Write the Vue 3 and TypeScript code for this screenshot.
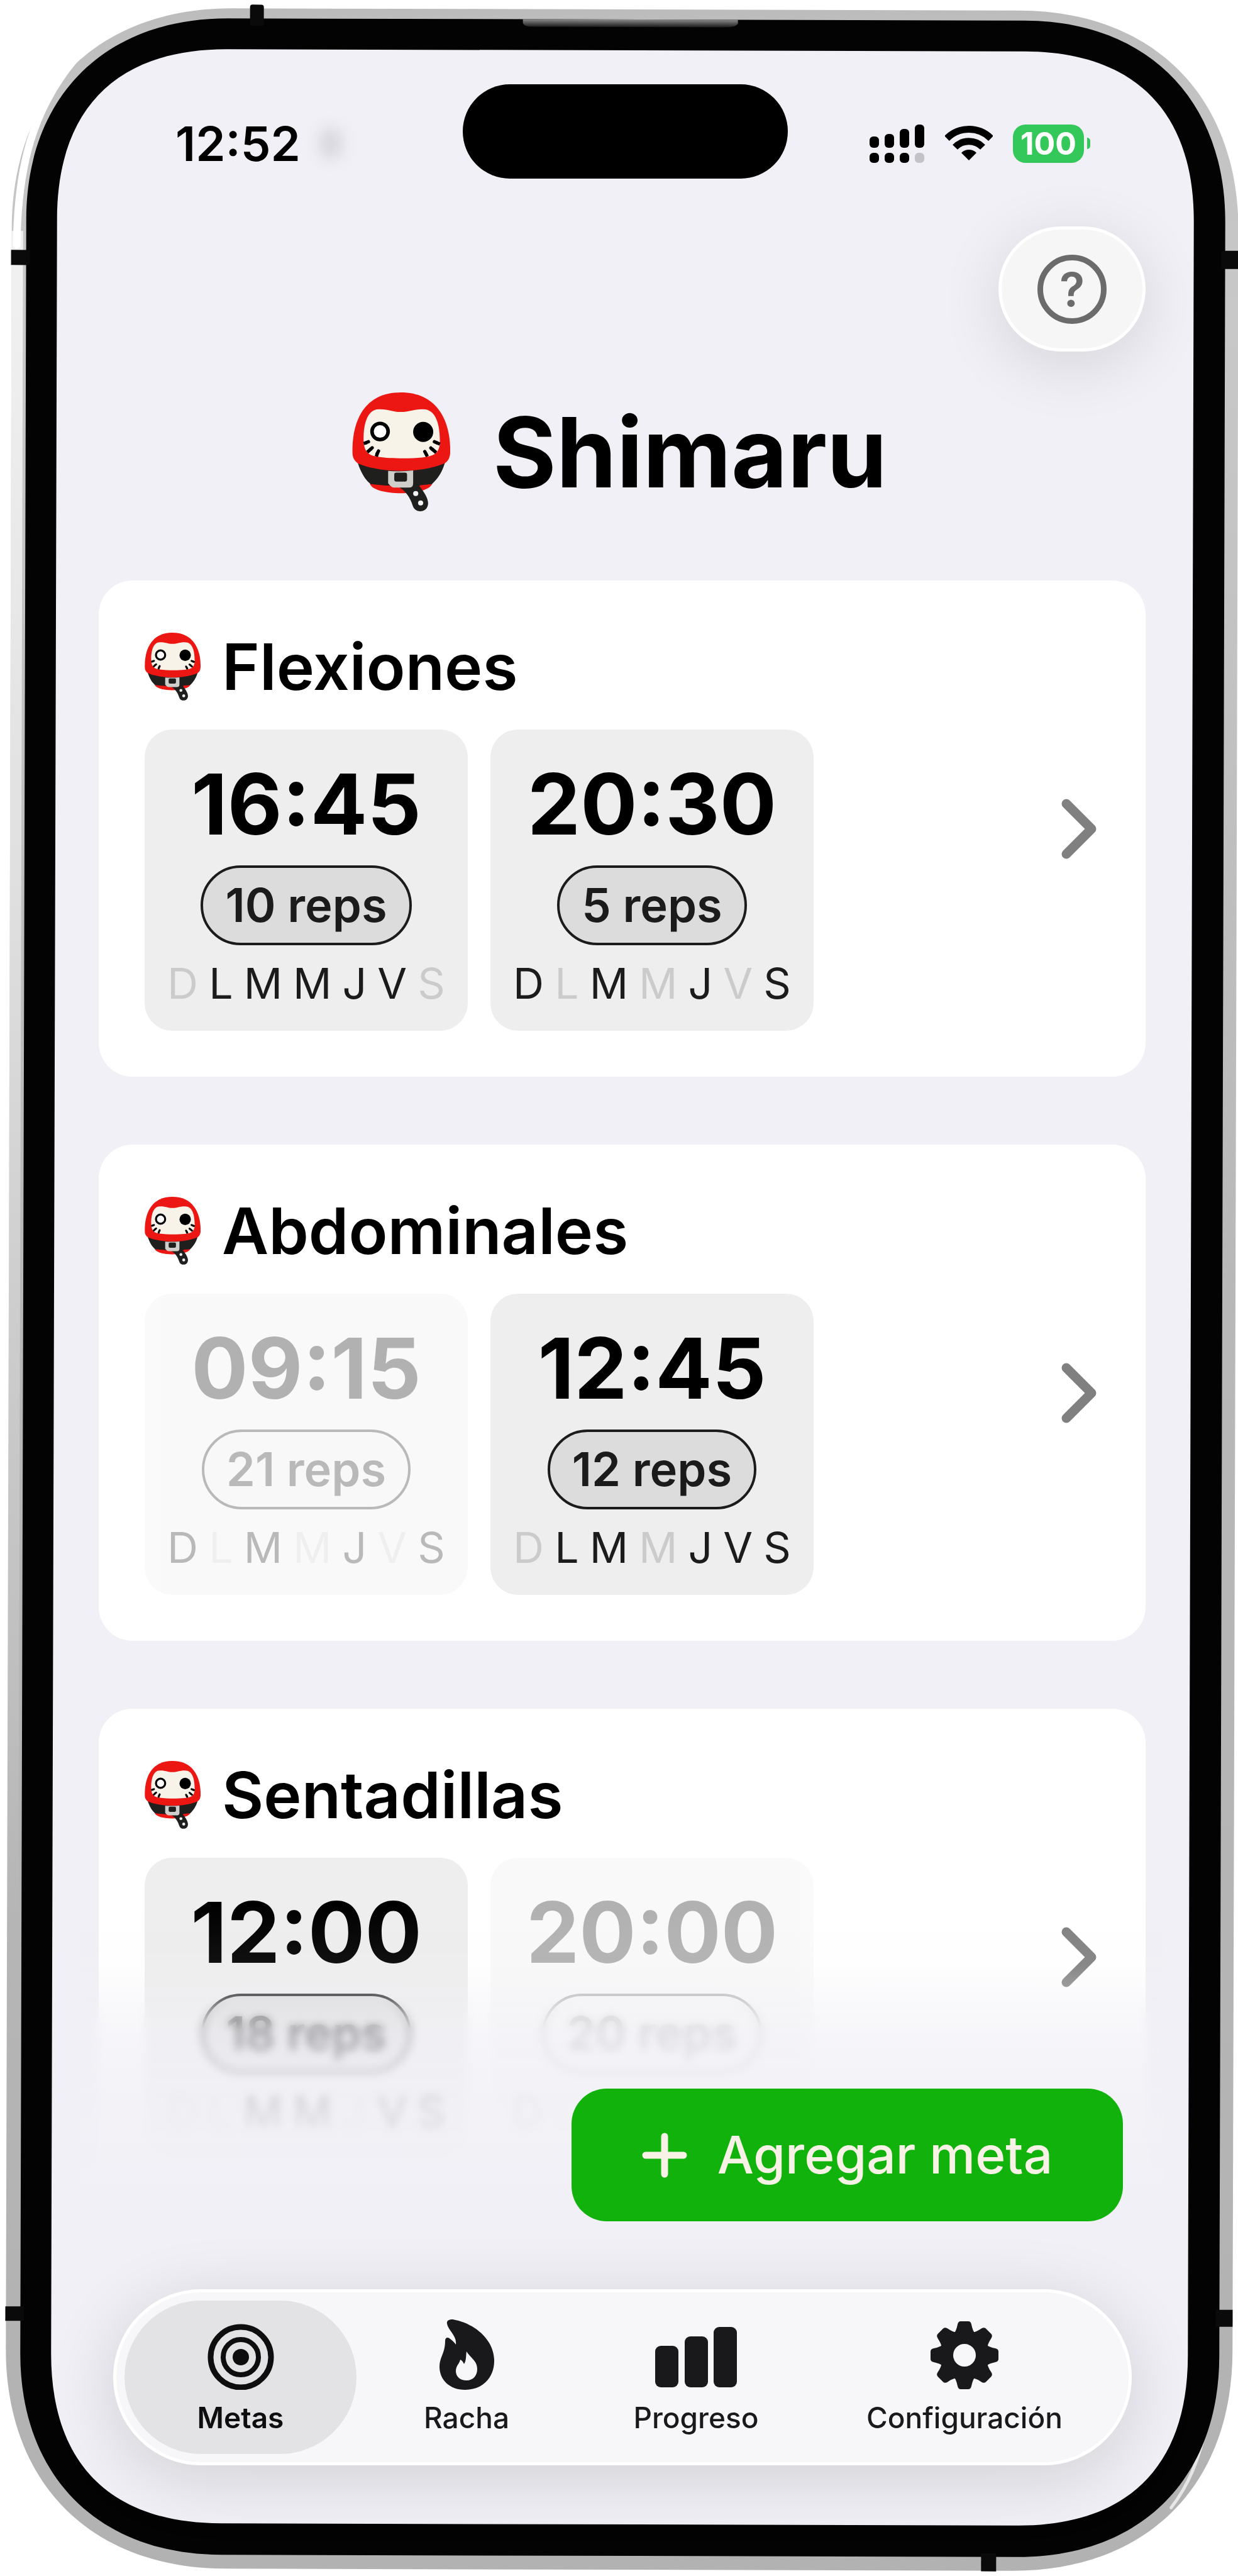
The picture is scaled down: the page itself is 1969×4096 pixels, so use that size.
<script setup lang="ts">
interface Slot {
  time: string
  reps: number
  /** One flag per weekday, Sunday first. */
  days: boolean[]
  muted?: boolean
  /** Number of weekdays left readable when the add button lies over the rest. */
  readable?: number
}

interface Goal {
  name: string
  slots: Slot[]
}

const weekdays: string[] = ['D', 'L', 'M', 'M', 'J', 'V', 'S']

const week = (mask: string): boolean[] => mask.split('').map((c) => c === '1')

const goals: Goal[] = [
  {
    name: 'Flexiones',
    slots: [
      { time: '16:45', reps: 10, days: week('0111110') },
      { time: '20:30', reps: 5, days: week('1010101') },
    ],
  },
  {
    name: 'Abdominales',
    slots: [
      { time: '09:15', reps: 21, days: week('1010101'), muted: true },
      { time: '12:45', reps: 12, days: week('0110111') },
    ],
  },
  {
    name: 'Sentadillas',
    slots: [
      { time: '12:00', reps: 18, days: week('0011011') },
      { time: '20:00', reps: 20, days: week('1010101'), muted: true, readable: 2 },
    ],
  },
]

/** Rounded shell outline with a soft, continuous corner. */
function shell(l: number, t: number, r: number, b: number, e: number, k: number): string {
  const h = e - k
  return [
    `M${l} ${t + e}`,
    `C${l} ${t + h} ${l + h} ${t} ${l + e} ${t}`,
    `H${r - e}`,
    `C${r - h} ${t} ${r} ${t + h} ${r} ${t + e}`,
    `V${b - e}`,
    `C${r} ${b - h} ${r - h} ${b} ${r - e} ${b}`,
    `H${l + e}`,
    `C${l + h} ${b} ${l} ${b - h} ${l} ${b - e}`,
    'Z',
  ].join('')
}

const outer = shell(14, 15, 1965, 4086, 350, 214)
const bezel = shell(37, 31, 1944, 4064, 320, 195)
const display = shell(86, 80, 1894, 4014, 270, 175)
const teeth = [0, 45, 90, 135, 180, 225, 270, 315]
</script>

<template>
  <div class="phone">
    <svg class="frame" viewBox="0 0 1969 4096" preserveAspectRatio="none" aria-hidden="true">
      <defs>
        <linearGradient id="metal" x1="0" y1="0" x2="0" y2="1">
          <stop offset="0" stop-color="#bcbcbc" />
          <stop offset="0.03" stop-color="#c2c2c2" />
          <stop offset="0.12" stop-color="#c8c8c8" />
          <stop offset="0.5" stop-color="#b8b8b8" />
          <stop offset="1" stop-color="#b2b2b2" />
        </linearGradient>
        <linearGradient id="sheen" x1="0" y1="0" x2="0" y2="1">
          <stop offset="0" stop-color="#fff" stop-opacity="0.75" />
          <stop offset="0.4" stop-color="#fff" stop-opacity="0.5" />
          <stop offset="1" stop-color="#fff" stop-opacity="0" />
        </linearGradient>
        <linearGradient id="speaker" x1="0" y1="0" x2="0" y2="1">
          <stop offset="0" stop-color="#8a8a8a" />
          <stop offset="1" stop-color="#1c1c1c" />
        </linearGradient>
      </defs>
      <g transform="rotate(0.16 985 2048)">
        <path :d="outer" fill="url(#metal)" />
        <rect x="14" y="370" width="18" height="2700" fill="url(#sheen)" />
        <path d="M22 392C23 270 46 178 112 98" fill="none" stroke="#fff" stroke-width="12" stroke-linecap="round" />
        <path d="M1925 3850C1912 3910 1895 3950 1868 3985" fill="none" stroke="#e6e6e6" stroke-width="5" stroke-linecap="round" />
        <path :d="bezel" fill="#030303" />
        <path d="M826 31H1168V37Q1165 43 1150 43H840Q828 43 826 37Z" fill="url(#speaker)" />
        <g fill="#0a0a0a">
          <rect x="392" y="9" width="22" height="34" rx="4" />
          <rect x="13" y="400" width="30" height="24" />
          <rect x="1938" y="396" width="28" height="29" />
          <rect x="13" y="3670" width="30" height="23" />
          <rect x="1938" y="3670" width="27" height="27" />
          <rect x="1566" y="4058" width="24" height="29" />
        </g>
        <path :d="display" fill="#f1f0f6" />
      </g>
    </svg>

    <svg class="sprite" aria-hidden="true">
      <symbol id="daruma" viewBox="105 127 498 603">
        <path d="M195 590C215 655 490 655 512 590Z" fill="#ec1613" />
        <path d="M130 470C145 530 175 575 200 592Q355 612 510 592C540 565 565 530 580 470Z" fill="#1f1f1e" />
        <path d="M107 435C103 275 165 127 352 127C540 127 607 275 603 435C601 460 592 475 576 486C520 512 430 525 355 525C275 525 180 510 132 485C117 473 108 460 107 435Z" fill="#ec1613" />
        <path d="M164 380C160 300 178 212 240 212C290 210 310 226 352 226C395 226 420 210 465 212C532 212 552 290 551 385C545 440 520 450 460 457C400 463 300 463 240 454C190 448 168 430 164 380Z" fill="#f7f3e8" />
        <circle cx="247" cy="325" r="41" fill="#fff" stroke="#000" stroke-width="18" />
        <circle cx="466" cy="327" r="51" />
        <g fill="none" stroke="#000" stroke-width="17">
          <path d="M164 386L180 381M182 430L200 414M228 452L233 436M551 389L532 381M532 432L512 415M487 452L479 436" />
          <path d="M178 381L188 377M200 414L207 408M232 438L239 424M534 382L523 377M514 417L505 409M480 438L474 427" stroke-linecap="round" />
        </g>
        <path d="M340 606H450C470 635 490 660 491 690C488 740 425 742 413 702C400 660 375 625 340 606Z" fill="#1f1f1e" />
        <path d="M415 560L450 598L440 620H380Z" fill="#1f1f1e" />
        <path d="M288 525Q352 530 415 523V588Q415 610 393 610H318Q305 610 288 588Z" fill="#cfcecb" />
        <rect x="319" y="534" width="65" height="45" rx="10" fill="#1f1f1e" />
        <circle cx="428" cy="640" r="13" fill="#f4f3f6" />
        <circle cx="453" cy="688" r="13" fill="#f4f3f6" />
      </symbol>
    </svg>

    <header class="status">
      <div class="clock">
        <span>12:52</span>
        <span class="smudge"></span>
      </div>
      <div class="island"></div>
      <div class="indicators">
        <svg class="signal" viewBox="0 0 87 61" aria-label="Señal">
          <rect x="0" y="19" width="15" height="18" rx="6" />
          <rect x="24" y="15" width="15" height="22" rx="6" />
          <rect x="48" y="7" width="15" height="30" rx="6" />
          <rect x="72" y="0" width="15" height="37" rx="6" />
          <rect x="0" y="45" width="15" height="16" rx="6" />
          <rect x="24" y="45" width="15" height="16" rx="6" />
          <rect x="48" y="45" width="15" height="16" rx="6" />
          <rect x="72" y="45" width="15" height="16" rx="6" fill="#c3c2c7" />
        </svg>
        <svg class="wifi" viewBox="0 0 76 56" aria-label="Wi-Fi">
          <g fill="none" stroke="#000" stroke-width="11">
            <path d="M3 20A49.500 49.500 0 0 1 73 20" />
            <path d="M16 34A31 31 0 0 1 60 34" />
          </g>
          <path d="M38 55L26 43A17 17 0 0 1 50 43Z" />
        </svg>
        <div class="battery"><span class="level">100</span><span class="nub"></span></div>
      </div>
    </header>

    <div class="toolbar">
      <button class="help" type="button" aria-label="Ayuda"><span class="ring">?</span></button>
    </div>

    <div class="brand">
      <svg class="logo" aria-hidden="true"><use href="#daruma" /></svg>
      <h1>Shimaru</h1>
    </div>

    <main class="goals">
      <article v-for="goal in goals" :key="goal.name" class="card">
        <div class="body">
          <div class="heading">
            <svg class="mark" aria-hidden="true"><use href="#daruma" /></svg>
            <h2>{{ goal.name }}</h2>
          </div>
          <div class="slots">
            <section v-for="slot in goal.slots" :key="slot.time" class="slot" :class="{ muted: slot.muted }">
              <div class="time">{{ slot.time }}</div>
              <div class="reps">{{ slot.reps }} reps</div>
              <div class="days" :class="{ partial: slot.readable }">
                <span
                  v-for="(day, i) in weekdays.slice(0, slot.readable ?? 7)"
                  :key="i"
                  :class="{ off: !slot.days[i] }"
                >{{ day }}</span>
              </div>
            </section>
          </div>
        </div>
        <button class="open" type="button" :aria-label="'Abrir ' + goal.name">
          <svg viewBox="0 0 56 96"><path d="M8 8L48 48L8 88" /></svg>
        </button>
      </article>
      <div class="haze"></div>
      <div class="fade"></div>
      <button class="add" type="button">
        <svg viewBox="0 0 72 72" aria-hidden="true"><path d="M36 6V66M6 36H66" /></svg>
        <span>Agregar meta</span>
      </button>
    </main>

    <nav class="tabs">
      <button class="tab metas active" type="button">
        <svg width="106" height="112" viewBox="-53 -60 106 112" aria-hidden="true">
          <g fill="none" stroke="currentColor">
            <circle r="48" stroke-width="9" />
            <circle r="28" stroke-width="8" />
          </g>
          <circle r="13" fill="currentColor" />
        </svg>
        <span>Metas</span>
      </button>
      <button class="tab racha" type="button">
        <svg width="87" height="112" viewBox="0 0 87 112" aria-hidden="true">
          <path
            fill="currentColor"
            fill-rule="evenodd"
            d="M12 7C11 2 15 0 21 0C56 6 87 32 87 66C87 94 67 112 41 112C16 112 0 96 0 75C0 60 9 54 9 34C9 28 14 28 17 31C21 34 24 37 26 40C28 26 14 18 12 7ZM43 51C42 56 43 65 39 71C37 67 36 65 33 64C32 70 26 74 26 82C26 91 33 97 43 97C54 97 60 89 60 79C60 66 50 62 43 51Z"
          />
        </svg>
        <span>Racha</span>
      </button>
      <button class="tab progreso" type="button">
        <svg width="130" height="112" viewBox="0 -12 130 112" aria-hidden="true">
          <g fill="currentColor">
            <rect x="0" y="30" width="37" height="66" rx="9" />
            <rect x="47" y="15" width="37" height="81" rx="9" />
            <rect x="93" y="0" width="37" height="96" rx="9" />
          </g>
        </svg>
        <span>Progreso</span>
      </button>
      <button class="tab config" type="button">
        <svg width="110" height="116" viewBox="-55 -61 110 116" aria-hidden="true">
          <circle r="29" fill="none" stroke="currentColor" stroke-width="22" />
          <path
            v-for="angle in teeth"
            :key="angle"
            :transform="`rotate(${angle})`"
            fill="currentColor"
            d="M-17 -34Q-13 -39 -11 -49Q-10 -54 -6 -54H6Q10 -54 11 -49Q13 -39 17 -34Z"
          />
        </svg>
        <span>Configuración</span>
      </button>
    </nav>
  </div>
</template>

<style>
body {
  margin: 0;
  background: #fff;
}
</style>

<style scoped>
.phone {
  position: relative;
  box-sizing: border-box;
  display: flex;
  flex-direction: column;
  padding: 134px 147px 176px 157px;
  overflow: hidden;
  font-family: Inter, "Liberation Sans", sans-serif;
  color: #000;
}

.frame {
  position: absolute;
  inset: 0;
  width: 100%;
  height: 100%;
}

.sprite {
  position: absolute;
  width: 0;
  height: 0;
}

button {
  margin: 0;
  padding: 0;
  border: 0;
  background: none;
  font: inherit;
  color: inherit;
}

svg {
  display: block;
  flex: none;
}

/* Status bar */
.status {
  position: relative;
  display: grid;
  grid-template-columns: 1fr 517px 1fr;
  height: 150px;
  padding-left: 10px;
}

.clock {
  display: flex;
  align-items: center;
  gap: 32px;
  padding: 38px 0 0 112px;
  font-size: 76px;
  line-height: 80px;
  font-weight: 600;
}

.smudge {
  width: 32px;
  height: 48px;
  border-radius: 16px;
  background: #d4d3d9;
  filter: blur(12px);
}

.island {
  border-radius: 75px;
  background: #000;
}

.indicators {
  display: flex;
  align-items: center;
  justify-content: flex-end;
  padding: 38px 88px 0 0;
}

.signal {
  width: 87px;
  height: 61px;
  margin-right: 33px;
}

.wifi {
  width: 76px;
  height: 56px;
  margin-right: 32px;
}

.battery {
  display: flex;
  align-items: center;
  gap: 5px;
}

.level {
  width: 113px;
  border-radius: 20px;
  background: #34c759;
  color: #fff;
  font-size: 50px;
  line-height: 61px;
  font-weight: 700;
  text-align: center;
}

.nub {
  width: 5px;
  height: 18px;
  border-radius: 0 5px 5px 0;
  background: #34c759;
}

/* Header */
.toolbar {
  position: relative;
  display: flex;
  justify-content: flex-end;
  margin-top: 76px;
}

.help {
  display: flex;
  align-items: center;
  justify-content: center;
  box-sizing: border-box;
  width: 234px;
  height: 199px;
  border: 5px solid #fff;
  border-radius: 100px;
  background: #f6f6f6;
  box-shadow: 0 20px 100px rgba(0, 0, 0, 0.12);
}

.ring {
  box-sizing: border-box;
  width: 110px;
  height: 110px;
  border: 9px solid #6b6b6b;
  border-radius: 50%;
  color: #6b6b6b;
  font-size: 74px;
  line-height: 92px;
  font-weight: 600;
  text-align: center;
}

.brand {
  position: relative;
  display: flex;
  align-items: center;
  justify-content: center;
  gap: 68px;
  height: 189px;
  margin-top: 65px;
  padding-right: 8px;
}

.logo {
  width: 156px;
  height: 189px;
}

h1,
h2 {
  margin: 0;
}

h1 {
  font-size: 154px;
  line-height: 180px;
  font-weight: 700;
}

/* Goals */
.goals {
  position: relative;
  display: flex;
  flex-direction: column;
  gap: 108px;
  margin-top: 110px;
}

.card {
  display: flex;
  align-items: center;
  justify-content: space-between;
  padding: 73px 78px 73px 73px;
  border-radius: 54px;
  background: #fff;
}

.heading {
  display: flex;
  align-items: center;
  gap: 34px;
  height: 128px;
  margin-bottom: 36px;
}

.mark {
  width: 89px;
  height: 108px;
}

h2 {
  font-size: 102px;
  line-height: 128px;
  font-weight: 600;
}

.slots {
  display: flex;
  gap: 36px;
}

.slot {
  display: flex;
  flex-direction: column;
  align-items: center;
  box-sizing: border-box;
  width: 514px;
  padding: 40px 0 36px;
  border-radius: 44px;
  background: #eee;
}

.slot.muted {
  opacity: 0.3;
}

.time {
  font-size: 134px;
  line-height: 156px;
  font-weight: 700;
}

.reps {
  box-sizing: border-box;
  height: 127px;
  margin: 20px 0;
  padding: 0 35px;
  border: 4px solid #1b1b1b;
  border-radius: 64px;
  background: #dcdcdc;
  color: #1b1b1b;
  font-size: 74px;
  line-height: 119px;
  font-weight: 600;
}

.muted .reps {
  background: #ebebeb;
}

.days {
  display: flex;
  gap: 17px;
  color: #1b1b1b;
  font-size: 68px;
  line-height: 80px;
}

.partial {
  align-self: flex-start;
  padding-left: 34px;
}

.off {
  opacity: 0.16;
}

.open svg {
  width: 56px;
  height: 96px;
}

.open path {
  fill: none;
  stroke: #808080;
  stroke-width: 15;
  stroke-linecap: round;
  stroke-linejoin: round;
}

/* The end of the list dissolves behind the floating controls */
.haze,
.fade {
  position: absolute;
  right: -30px;
  left: -30px;
}

.haze {
  bottom: -20px;
  height: 350px;
  backdrop-filter: blur(7px);
  -webkit-mask-image: linear-gradient(to bottom, transparent, #000 50px);
  mask-image: linear-gradient(to bottom, transparent, #000 50px);
}

.fade {
  bottom: -20px;
  height: 500px;
  background: linear-gradient(
    to bottom,
    rgba(241, 240, 246, 0) 0,
    rgba(241, 240, 246, 0.07) 100px,
    rgba(241, 240, 246, 0.4) 160px,
    rgba(241, 240, 246, 0.62) 210px,
    rgba(241, 240, 246, 0.74) 260px,
    rgba(241, 240, 246, 0.86) 320px,
    rgba(241, 240, 246, 0.92) 400px,
    #f1f0f6 500px
  );
}

.add {
  position: absolute;
  right: 36px;
  bottom: -26px;
  display: flex;
  align-items: center;
  justify-content: center;
  gap: 48px;
  width: 877px;
  height: 211px;
  border-radius: 56px;
  background: #10b20b;
  color: #f8f2e6;
  font-size: 82px;
  line-height: 100px;
  font-weight: 500;
}

.add svg {
  width: 72px;
  height: 72px;
}

.add path {
  fill: none;
  stroke: #f8f2e6;
  stroke-width: 11;
  stroke-linecap: round;
}

/* Tab bar */
.tabs {
  position: relative;
  display: flex;
  box-sizing: border-box;
  height: 280px;
  margin: 134px 22px 0 23px;
  padding: 13px 24px 13px 13px;
  border: 5px solid #fff;
  border-radius: 140px;
  background: #f7f7f9;
  box-shadow: 0 20px 110px rgba(0, 0, 0, 0.14);
}

.tab {
  display: flex;
  flex-direction: column;
  align-items: center;
  justify-content: flex-end;
  gap: 16px;
  padding-bottom: 30px;
  border-radius: 122px;
  color: #19191b;
  font-size: 46px;
  line-height: 56px;
  font-weight: 500;
}

.active {
  background: #e3e3e5;
  color: #0e0e0f;
  font-weight: 600;
}

.metas {
  flex: 369 0 0;
}

.racha {
  flex: 350 0 0;
}

.progreso {
  flex: 380 0 0;
}

.config {
  flex: 474 0 0;
}
</style>
